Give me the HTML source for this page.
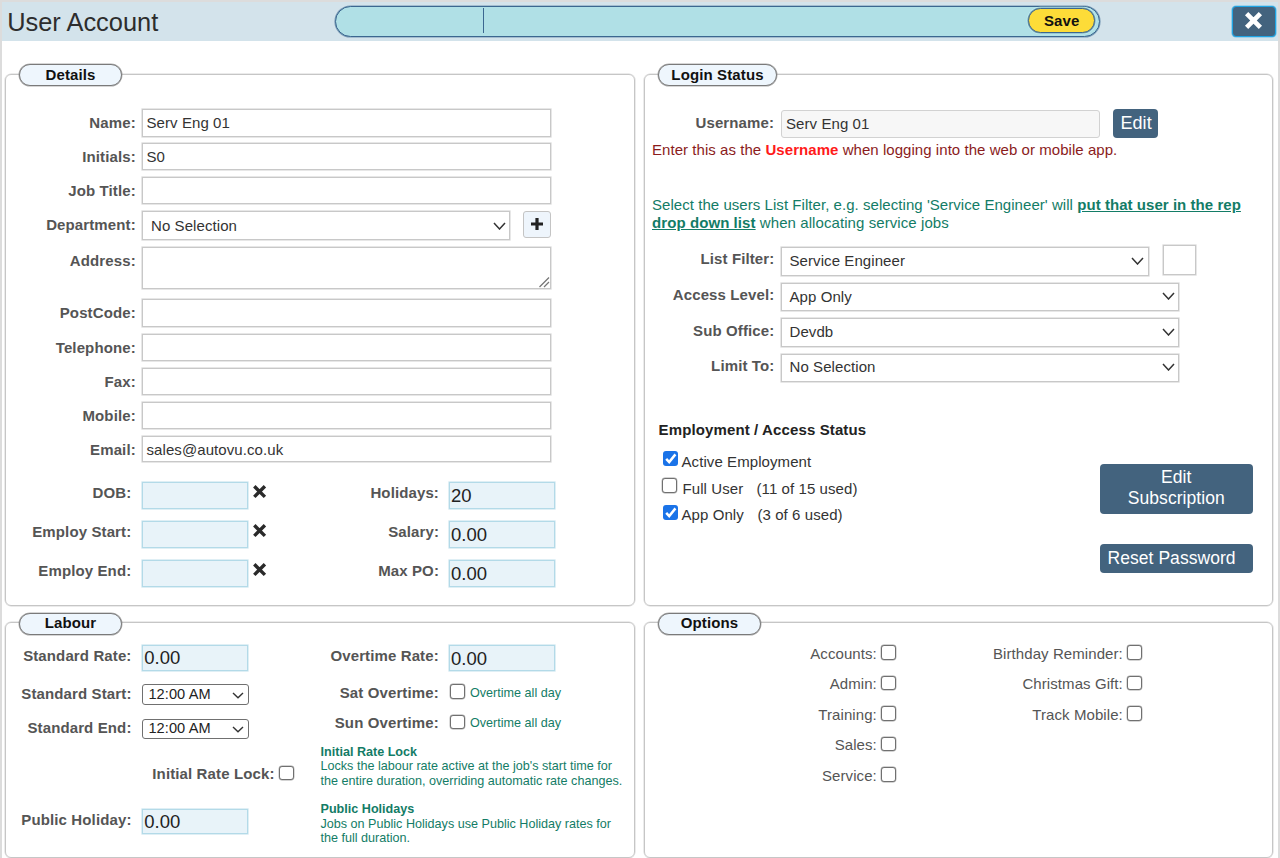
<!DOCTYPE html>
<html><head><meta charset="utf-8"><title>User Account</title>
<style>
html,body{margin:0;padding:0;background:#fff;width:1280px;height:858px;overflow:hidden}
body{position:relative;font-family:"Liberation Sans",sans-serif}
body>div{position:absolute;box-sizing:border-box}
.t{white-space:nowrap;line-height:1}
</style></head><body>
<div style="left:0px;top:0px;width:1280px;height:900px;border:2px solid #dcdcdc;"></div>
<div style="left:2px;top:2px;width:1276px;height:39px;background:#d3e3eb;"></div>
<div class="t" style="left:7.2px;top:10px;font-size:25.4px;font-weight:normal;color:#2d2d2d;letter-spacing:0.0px;">User Account</div>
<div style="left:334.5px;top:5.5px;width:765.0px;height:31.5px;background:#b0e0e6;border:1px solid #3b6790;border-radius:16px;box-shadow:0 0 0 0.6px rgba(59,103,144,0.6);"></div>
<div style="left:482.5px;top:8.2px;width:1.5px;height:25.3px;background:#3b6790;"></div>
<div style="left:1027.5px;top:8px;width:67.0px;height:25px;background:#fddc38;border:1.5px solid #3b6790;border-radius:13px;box-shadow:0 0 0 0.6px rgba(59,103,144,0.6),0 0 0 1.3px #c0eff1;"></div>
<div class="t" style="left:1044px;top:13px;font-size:15px;font-weight:bold;color:#111;letter-spacing:0.12px;">Save</div>
<div style="left:1231.5px;top:5.5px;width:44.0px;height:31.3px;background:#43637e;border:1px solid #1ea4e4;border-radius:4px;box-shadow:0 0 0 0.6px rgba(30,164,228,0.55);"></div>
<svg style="position:absolute;left:1244px;top:11px" width="19" height="19" viewBox="0 0 19 19"><path d="M2.6 2.6L16.4 16.4M16.4 2.6L2.6 16.4" stroke="#fff" stroke-width="4.6"/></svg>
<div style="left:5px;top:74px;width:630px;height:532px;border:1px solid #c6c6c6;border-radius:6px;box-shadow:0 0 0 0.5px rgba(198,198,198,0.7);"></div>
<div style="left:644px;top:74px;width:629px;height:532px;border:1px solid #c6c6c6;border-radius:6px;box-shadow:0 0 0 0.5px rgba(198,198,198,0.7);"></div>
<div style="left:5px;top:622px;width:630px;height:236px;border:1px solid #c6c6c6;border-radius:6px;box-shadow:0 0 0 0.5px rgba(198,198,198,0.7);"></div>
<div style="left:644px;top:622px;width:629px;height:236px;border:1px solid #c6c6c6;border-radius:6px;box-shadow:0 0 0 0.5px rgba(198,198,198,0.7);"></div>
<div style="left:19px;top:64.3px;width:103px;height:21.5px;background:#eef6fd;border:1px solid #7a7a7a;border-radius:12px;box-shadow:0 0 0 0.5px rgba(122,122,122,0.6);"></div>
<div class="t" style="left:19px;width:103px;text-align:center;top:67px;font-size:15px;font-weight:bold;color:#111;letter-spacing:0.12px;">Details</div>
<div style="left:658px;top:64.3px;width:119px;height:21.5px;background:#eef6fd;border:1px solid #7a7a7a;border-radius:12px;box-shadow:0 0 0 0.5px rgba(122,122,122,0.6);"></div>
<div class="t" style="left:658px;width:119px;text-align:center;top:67px;font-size:15px;font-weight:bold;color:#111;letter-spacing:0.12px;">Login Status</div>
<div style="left:19px;top:612.5px;width:103px;height:22.0px;background:#eef6fd;border:1px solid #7a7a7a;border-radius:12px;box-shadow:0 0 0 0.5px rgba(122,122,122,0.6);"></div>
<div class="t" style="left:19px;width:103px;text-align:center;top:615px;font-size:15px;font-weight:bold;color:#111;letter-spacing:0.12px;">Labour</div>
<div style="left:658px;top:612.5px;width:103px;height:22.0px;background:#eef6fd;border:1px solid #7a7a7a;border-radius:12px;box-shadow:0 0 0 0.5px rgba(122,122,122,0.6);"></div>
<div class="t" style="left:658px;width:103px;text-align:center;top:615px;font-size:15px;font-weight:bold;color:#111;letter-spacing:0.12px;">Options</div>
<div style="left:142.4px;top:109.1px;width:408.6px;height:27.5px;background:#fff;border:1px solid #c8c8c8;box-shadow:0 0 0 0.6px rgba(200,200,200,0.7);"></div>
<div class="t" style="right:1144.2px;text-align:right;top:115px;font-size:15px;font-weight:bold;color:#555;letter-spacing:0.12px;">Name:</div>
<div class="t" style="left:146.5px;top:115px;font-size:15px;font-weight:normal;color:#333;letter-spacing:0.08px;">Serv Eng 01</div>
<div style="left:142.4px;top:143.1px;width:408.6px;height:27.3px;background:#fff;border:1px solid #c8c8c8;box-shadow:0 0 0 0.6px rgba(200,200,200,0.7);"></div>
<div class="t" style="right:1144.2px;text-align:right;top:149px;font-size:15px;font-weight:bold;color:#555;letter-spacing:0.12px;">Initials:</div>
<div class="t" style="left:146.5px;top:149px;font-size:15px;font-weight:normal;color:#333;letter-spacing:0.08px;">S0</div>
<div style="left:142.4px;top:176.8px;width:408.6px;height:27.0px;background:#fff;border:1px solid #c8c8c8;box-shadow:0 0 0 0.6px rgba(200,200,200,0.7);"></div>
<div class="t" style="right:1144.2px;text-align:right;top:183px;font-size:15px;font-weight:bold;color:#555;letter-spacing:0.12px;">Job Title:</div>
<div style="left:142.4px;top:299.4px;width:408.6px;height:27.3px;background:#fff;border:1px solid #c8c8c8;box-shadow:0 0 0 0.6px rgba(200,200,200,0.7);"></div>
<div class="t" style="right:1144.2px;text-align:right;top:305px;font-size:15px;font-weight:bold;color:#555;letter-spacing:0.12px;">PostCode:</div>
<div style="left:142.4px;top:334px;width:408.6px;height:26.8px;background:#fff;border:1px solid #c8c8c8;box-shadow:0 0 0 0.6px rgba(200,200,200,0.7);"></div>
<div class="t" style="right:1144.2px;text-align:right;top:340px;font-size:15px;font-weight:bold;color:#555;letter-spacing:0.12px;">Telephone:</div>
<div style="left:142.4px;top:368px;width:408.6px;height:26.6px;background:#fff;border:1px solid #c8c8c8;box-shadow:0 0 0 0.6px rgba(200,200,200,0.7);"></div>
<div class="t" style="right:1144.2px;text-align:right;top:374px;font-size:15px;font-weight:bold;color:#555;letter-spacing:0.12px;">Fax:</div>
<div style="left:142.4px;top:402.2px;width:408.6px;height:26.4px;background:#fff;border:1px solid #c8c8c8;box-shadow:0 0 0 0.6px rgba(200,200,200,0.7);"></div>
<div class="t" style="right:1144.2px;text-align:right;top:408px;font-size:15px;font-weight:bold;color:#555;letter-spacing:0.12px;">Mobile:</div>
<div style="left:142.4px;top:436.1px;width:408.6px;height:26.4px;background:#fff;border:1px solid #c8c8c8;box-shadow:0 0 0 0.6px rgba(200,200,200,0.7);"></div>
<div class="t" style="right:1144.2px;text-align:right;top:442px;font-size:15px;font-weight:bold;color:#555;letter-spacing:0.12px;">Email:</div>
<div class="t" style="left:146.5px;top:442px;font-size:15px;font-weight:normal;color:#333;letter-spacing:0.08px;">sales@autovu.co.uk</div>
<div style="left:142.4px;top:210.6px;width:368.1px;height:29.4px;background:#fff;border:1px solid #c8c8c8;box-shadow:0 0 0 0.6px rgba(200,200,200,0.7);"></div>
<div class="t" style="right:1144.2px;text-align:right;top:217px;font-size:15px;font-weight:bold;color:#555;letter-spacing:0.12px;">Department:</div>
<div class="t" style="left:151px;top:218px;font-size:15px;font-weight:normal;color:#333;letter-spacing:0.08px;">No Selection</div>
<svg style="position:absolute;left:493px;top:221.5px" width="13" height="8.0"><path d="M1 1L6.5 7.0L12 1" fill="none" stroke="#333" stroke-width="1.5"/></svg>
<div style="left:523px;top:210.6px;width:27.6px;height:27.1px;background:#eef5fc;border:1.5px solid #c4c4c4;border-radius:3px;"></div>
<svg style="position:absolute;left:530px;top:217px" width="14" height="14"><path d="M7 1V13M1 7H13" stroke="#222" stroke-width="3.2"/></svg>
<div style="left:142.4px;top:247px;width:408.6px;height:41.8px;background:#fff;border:1px solid #c8c8c8;box-shadow:0 0 0 0.6px rgba(200,200,200,0.7);"></div>
<div class="t" style="right:1144.2px;text-align:right;top:253px;font-size:15px;font-weight:bold;color:#555;letter-spacing:0.12px;">Address:</div>
<svg style="position:absolute;left:538px;top:276px" width="12" height="12"><path d="M1.5 11L11 1.5M6 11L11 6" stroke="#777" stroke-width="1.3"/></svg>
<div style="left:142.3px;top:482px;width:105.6px;height:26.5px;background:#e8f3f9;border:1px solid #b3dae8;box-shadow:0 0 0 0.6px rgba(179,218,232,0.7);"></div>
<div class="t" style="right:1148.7px;text-align:right;top:485px;font-size:15px;font-weight:bold;color:#555;letter-spacing:0.12px;">DOB:</div>
<svg style="position:absolute;left:252px;top:483.8px" width="15" height="15"><path d="M2.3 2.3L12.9 12.9M12.9 2.3L2.3 12.9" stroke="#2a2a2a" stroke-width="3.4"/></svg>
<div style="left:449.2px;top:482px;width:105.8px;height:26.5px;background:#e8f3f9;border:1px solid #b3dae8;box-shadow:0 0 0 0.6px rgba(179,218,232,0.7);"></div>
<div class="t" style="right:841.0px;text-align:right;top:485px;font-size:15px;font-weight:bold;color:#555;letter-spacing:0.12px;">Holidays:</div>
<div class="t" style="left:451px;top:487px;font-size:18.5px;font-weight:normal;color:#222;letter-spacing:0.05px;">20</div>
<div style="left:142.3px;top:521.3px;width:105.6px;height:26.5px;background:#e8f3f9;border:1px solid #b3dae8;box-shadow:0 0 0 0.6px rgba(179,218,232,0.7);"></div>
<div class="t" style="right:1148.7px;text-align:right;top:524px;font-size:15px;font-weight:bold;color:#555;letter-spacing:0.12px;">Employ Start:</div>
<svg style="position:absolute;left:252px;top:523.1px" width="15" height="15"><path d="M2.3 2.3L12.9 12.9M12.9 2.3L2.3 12.9" stroke="#2a2a2a" stroke-width="3.4"/></svg>
<div style="left:449.2px;top:521.3px;width:105.8px;height:26.5px;background:#e8f3f9;border:1px solid #b3dae8;box-shadow:0 0 0 0.6px rgba(179,218,232,0.7);"></div>
<div class="t" style="right:841.0px;text-align:right;top:524px;font-size:15px;font-weight:bold;color:#555;letter-spacing:0.12px;">Salary:</div>
<div class="t" style="left:451px;top:526px;font-size:18.5px;font-weight:normal;color:#222;letter-spacing:0.05px;">0.00</div>
<div style="left:142.3px;top:560.3px;width:105.6px;height:26.5px;background:#e8f3f9;border:1px solid #b3dae8;box-shadow:0 0 0 0.6px rgba(179,218,232,0.7);"></div>
<div class="t" style="right:1148.7px;text-align:right;top:563px;font-size:15px;font-weight:bold;color:#555;letter-spacing:0.12px;">Employ End:</div>
<svg style="position:absolute;left:252px;top:562.1px" width="15" height="15"><path d="M2.3 2.3L12.9 12.9M12.9 2.3L2.3 12.9" stroke="#2a2a2a" stroke-width="3.4"/></svg>
<div style="left:449.2px;top:560.3px;width:105.8px;height:26.5px;background:#e8f3f9;border:1px solid #b3dae8;box-shadow:0 0 0 0.6px rgba(179,218,232,0.7);"></div>
<div class="t" style="right:841.0px;text-align:right;top:563px;font-size:15px;font-weight:bold;color:#555;letter-spacing:0.12px;">Max PO:</div>
<div class="t" style="left:451px;top:565px;font-size:18.5px;font-weight:normal;color:#222;letter-spacing:0.05px;">0.00</div>
<div style="left:142.4px;top:645px;width:105.5px;height:25.9px;background:#e8f3f9;border:1px solid #b3dae8;box-shadow:0 0 0 0.6px rgba(179,218,232,0.7);"></div>
<div class="t" style="right:1148.5px;text-align:right;top:648px;font-size:15px;font-weight:bold;color:#555;letter-spacing:0.12px;">Standard Rate:</div>
<div class="t" style="left:144.2px;top:649px;font-size:18.5px;font-weight:normal;color:#222;letter-spacing:0.05px;">0.00</div>
<div style="left:142.4px;top:684.2px;width:106.2px;height:21.1px;background:#fff;border:1.3px solid #707070;border-radius:3px;"></div>
<div class="t" style="right:1148.5px;text-align:right;top:686px;font-size:15px;font-weight:bold;color:#555;letter-spacing:0.12px;">Standard Start:</div>
<div class="t" style="left:148.4px;top:687px;font-size:14.6px;font-weight:normal;color:#222;letter-spacing:0.08px;">12:00 AM</div>
<svg style="position:absolute;left:232px;top:691.9px" width="12" height="6.8"><path d="M1 1L6.0 5.8L11 1" fill="none" stroke="#333" stroke-width="1.4"/></svg>
<div style="left:142.4px;top:718.7px;width:106.2px;height:20.6px;background:#fff;border:1.3px solid #707070;border-radius:3px;"></div>
<div class="t" style="right:1148.5px;text-align:right;top:720px;font-size:15px;font-weight:bold;color:#555;letter-spacing:0.12px;">Standard End:</div>
<div class="t" style="left:148.4px;top:721px;font-size:14.6px;font-weight:normal;color:#222;letter-spacing:0.08px;">12:00 AM</div>
<svg style="position:absolute;left:232px;top:726.4px" width="12" height="6.8"><path d="M1 1L6.0 5.8L11 1" fill="none" stroke="#333" stroke-width="1.4"/></svg>
<div class="t" style="right:1005.5px;text-align:right;top:766px;font-size:15px;font-weight:bold;color:#555;letter-spacing:0.12px;">Initial Rate Lock:</div>
<div style="left:279px;top:765.7px;width:15px;height:14.8px;background:#fff;border:1px solid #707070;border-radius:3px;box-shadow:0 0 0 0.4px rgba(112,112,112,0.6);"></div>
<div style="left:142.4px;top:808.6px;width:105.5px;height:25.8px;background:#e8f3f9;border:1px solid #b3dae8;box-shadow:0 0 0 0.6px rgba(179,218,232,0.7);"></div>
<div class="t" style="right:1148.5px;text-align:right;top:812px;font-size:15px;font-weight:bold;color:#555;letter-spacing:0.12px;">Public Holiday:</div>
<div class="t" style="left:144.2px;top:813px;font-size:18.5px;font-weight:normal;color:#222;letter-spacing:0.05px;">0.00</div>
<div style="left:449.2px;top:645.2px;width:105.8px;height:25.7px;background:#e8f3f9;border:1px solid #b3dae8;box-shadow:0 0 0 0.6px rgba(179,218,232,0.7);"></div>
<div class="t" style="right:841.2px;text-align:right;top:648px;font-size:15px;font-weight:bold;color:#555;letter-spacing:0.12px;">Overtime Rate:</div>
<div class="t" style="left:451px;top:650px;font-size:18.5px;font-weight:normal;color:#222;letter-spacing:0.05px;">0.00</div>
<div class="t" style="right:841.2px;text-align:right;top:685px;font-size:15px;font-weight:bold;color:#555;letter-spacing:0.12px;">Sat Overtime:</div>
<div style="left:450.1px;top:684.3px;width:14.8px;height:14.6px;background:#fff;border:1px solid #707070;border-radius:3px;box-shadow:0 0 0 0.4px rgba(112,112,112,0.6);"></div>
<div class="t" style="left:470px;top:687px;font-size:12.6px;font-weight:normal;color:#137c66;letter-spacing:0.0px;">Overtime all day</div>
<div class="t" style="right:841.2px;text-align:right;top:715px;font-size:15px;font-weight:bold;color:#555;letter-spacing:0.12px;">Sun Overtime:</div>
<div style="left:450.1px;top:714.6px;width:14.8px;height:14.6px;background:#fff;border:1px solid #707070;border-radius:3px;box-shadow:0 0 0 0.4px rgba(112,112,112,0.6);"></div>
<div class="t" style="left:470px;top:717px;font-size:12.6px;font-weight:normal;color:#137c66;letter-spacing:0.0px;">Overtime all day</div>
<div class="t" style="left:320.5px;top:746px;font-size:12.6px;font-weight:bold;color:#137c66;letter-spacing:0.0px;">Initial Rate Lock</div>
<div class="t" style="left:320.5px;top:760px;font-size:12.6px;font-weight:normal;color:#137c66;letter-spacing:0.0px;">Locks the labour rate active at the job's start time for</div>
<div class="t" style="left:320.5px;top:775px;font-size:12.6px;font-weight:normal;color:#137c66;letter-spacing:0.0px;">the entire duration, overriding automatic rate changes.</div>
<div class="t" style="left:320.5px;top:803px;font-size:12.6px;font-weight:bold;color:#137c66;letter-spacing:0.0px;">Public Holidays</div>
<div class="t" style="left:320.5px;top:818px;font-size:12.6px;font-weight:normal;color:#137c66;letter-spacing:0.0px;">Jobs on Public Holidays use Public Holiday rates for</div>
<div class="t" style="left:320.5px;top:832px;font-size:12.6px;font-weight:normal;color:#137c66;letter-spacing:0.0px;">the full duration.</div>
<div class="t" style="right:505.9px;text-align:right;top:115px;font-size:15px;font-weight:bold;color:#555;letter-spacing:0.12px;">Username:</div>
<div style="left:781.25px;top:109.7px;width:318.25px;height:28.6px;background:#f7f7f7;border:1.5px solid #d2d2d2;border-radius:3px;"></div>
<div class="t" style="left:786px;top:116px;font-size:15px;font-weight:normal;color:#333;letter-spacing:0.08px;">Serv Eng 01</div>
<div style="left:1113px;top:109.2px;width:45px;height:28.9px;background:#43637e;border-radius:4px;"></div>
<div class="t" style="left:1120.5px;top:114px;font-size:18px;font-weight:normal;color:#fff;letter-spacing:0.05px;">Edit</div>
<div class="t" style="left:652px;top:142px;font-size:15px;font-weight:normal;color:#8b1c1c;letter-spacing:0.05px;">Enter this as the <b style="color:#ff1a1a">Username</b> when logging into the web or mobile app.</div>
<div class="t" style="left:652px;top:197px;font-size:15px;font-weight:normal;color:#137c66;letter-spacing:0.05px;">Select the users List Filter, e.g. selecting 'Service Engineer' will <b style="text-decoration:underline">put that user in the rep</b></div>
<div class="t" style="left:652px;top:215px;font-size:15px;font-weight:normal;color:#137c66;letter-spacing:0.08px;"><b style="text-decoration:underline">drop down list</b> when allocating service jobs</div>
<div class="t" style="right:505.6px;text-align:right;top:251px;font-size:15px;font-weight:bold;color:#555;letter-spacing:0.12px;">List Filter:</div>
<div style="left:780.9px;top:247px;width:367.85px;height:28.5px;background:#fff;border:1px solid #c8c8c8;box-shadow:0 0 0 0.6px rgba(200,200,200,0.7);"></div>
<div class="t" style="left:789.5px;top:253px;font-size:15px;font-weight:normal;color:#333;letter-spacing:0.08px;">Service Engineer</div>
<svg style="position:absolute;left:1131.25px;top:256.5px" width="13.0" height="8.0"><path d="M1 1L6.5 7.0L12.0 1" fill="none" stroke="#333" stroke-width="1.5"/></svg>
<div class="t" style="right:505.6px;text-align:right;top:287px;font-size:15px;font-weight:bold;color:#555;letter-spacing:0.12px;">Access Level:</div>
<div style="left:780.9px;top:282.5px;width:398.6px;height:28.3px;background:#fff;border:1px solid #c8c8c8;box-shadow:0 0 0 0.6px rgba(200,200,200,0.7);"></div>
<div class="t" style="left:789.5px;top:289px;font-size:15px;font-weight:normal;color:#333;letter-spacing:0.08px;">App Only</div>
<svg style="position:absolute;left:1162.0px;top:292.0px" width="13.0" height="8.0"><path d="M1 1L6.5 7.0L12.0 1" fill="none" stroke="#333" stroke-width="1.5"/></svg>
<div class="t" style="right:505.6px;text-align:right;top:323px;font-size:15px;font-weight:bold;color:#555;letter-spacing:0.12px;">Sub Office:</div>
<div style="left:780.9px;top:318.3px;width:398.6px;height:28.3px;background:#fff;border:1px solid #c8c8c8;box-shadow:0 0 0 0.6px rgba(200,200,200,0.7);"></div>
<div class="t" style="left:789.5px;top:324px;font-size:15px;font-weight:normal;color:#333;letter-spacing:0.08px;">Devdb</div>
<svg style="position:absolute;left:1162.0px;top:327.8px" width="13.0" height="8.0"><path d="M1 1L6.5 7.0L12.0 1" fill="none" stroke="#333" stroke-width="1.5"/></svg>
<div class="t" style="right:505.6px;text-align:right;top:358px;font-size:15px;font-weight:bold;color:#555;letter-spacing:0.12px;">Limit To:</div>
<div style="left:780.9px;top:353.6px;width:398.6px;height:28.9px;background:#fff;border:1px solid #c8c8c8;box-shadow:0 0 0 0.6px rgba(200,200,200,0.7);"></div>
<div class="t" style="left:789.5px;top:359px;font-size:15px;font-weight:normal;color:#333;letter-spacing:0.08px;">No Selection</div>
<svg style="position:absolute;left:1162.0px;top:363.1px" width="13.0" height="8.0"><path d="M1 1L6.5 7.0L12.0 1" fill="none" stroke="#333" stroke-width="1.5"/></svg>
<div style="left:1162.5px;top:245px;width:33.0px;height:29.5px;background:#fff;border:1px solid #c8c8c8;box-shadow:0 0 0 0.6px rgba(200,200,200,0.7);"></div>
<div class="t" style="left:658.6px;top:422px;font-size:15px;font-weight:bold;color:#222;letter-spacing:0.12px;">Employment / Access Status</div>
<div style="left:662.5px;top:451.2px;width:15.0px;height:15.2px;background:#1a73e8;border-radius:3px;"><svg style="position:absolute;left:1px;top:1px" width="13" height="13"><path d="M2.2 6.8L5.2 10L11.4 2.4" fill="none" stroke="#fff" stroke-width="2.5"/></svg></div>
<div class="t" style="left:681.5px;top:454px;font-size:15px;font-weight:normal;color:#333;letter-spacing:0.08px;">Active Employment</div>
<div style="left:662.3px;top:478px;width:15.0px;height:15.3px;background:#fff;border:1px solid #707070;border-radius:3px;box-shadow:0 0 0 0.4px rgba(112,112,112,0.6);"></div>
<div class="t" style="left:682.5px;top:481px;font-size:15px;font-weight:normal;color:#333;letter-spacing:0.08px;">Full User</div>
<div class="t" style="left:756.5px;top:481px;font-size:15px;font-weight:normal;color:#333;letter-spacing:0.08px;">(11 of 15 used)</div>
<div style="left:662.5px;top:504.5px;width:15.0px;height:15.1px;background:#1a73e8;border-radius:3px;"><svg style="position:absolute;left:1px;top:1px" width="13" height="13"><path d="M2.2 6.8L5.2 10L11.4 2.4" fill="none" stroke="#fff" stroke-width="2.5"/></svg></div>
<div class="t" style="left:681.5px;top:507px;font-size:15px;font-weight:normal;color:#333;letter-spacing:0.08px;">App Only</div>
<div class="t" style="left:757.4px;top:507px;font-size:15px;font-weight:normal;color:#333;letter-spacing:0.08px;">(3 of 6 used)</div>
<div style="left:1099.5px;top:463.75px;width:153.5px;height:50.0px;background:#43637e;border-radius:4px;"></div>
<div class="t" style="left:1099.5px;width:153.5px;text-align:center;top:469px;font-size:17.5px;font-weight:normal;color:#fff;letter-spacing:0.05px;">Edit</div>
<div class="t" style="left:1099.5px;width:153.5px;text-align:center;top:490px;font-size:17.5px;font-weight:normal;color:#fff;letter-spacing:0.05px;">Subscription</div>
<div style="left:1099.5px;top:543.75px;width:153.5px;height:28.75px;background:#43637e;border-radius:4px;"></div>
<div class="t" style="left:1107.5px;top:550px;font-size:17.5px;font-weight:normal;color:#fff;letter-spacing:0.05px;">Reset Password</div>
<div class="t" style="right:403.2px;text-align:right;top:646px;font-size:15px;font-weight:normal;color:#555;letter-spacing:0.08px;">Accounts:</div>
<div style="left:881.1px;top:645.2px;width:14.8px;height:14.7px;background:#fff;border:1px solid #707070;border-radius:3px;box-shadow:0 0 0 0.4px rgba(112,112,112,0.6);"></div>
<div class="t" style="right:403.2px;text-align:right;top:676px;font-size:15px;font-weight:normal;color:#555;letter-spacing:0.08px;">Admin:</div>
<div style="left:881.1px;top:675.7px;width:14.8px;height:14.7px;background:#fff;border:1px solid #707070;border-radius:3px;box-shadow:0 0 0 0.4px rgba(112,112,112,0.6);"></div>
<div class="t" style="right:403.2px;text-align:right;top:707px;font-size:15px;font-weight:normal;color:#555;letter-spacing:0.08px;">Training:</div>
<div style="left:881.1px;top:706.2px;width:14.8px;height:14.7px;background:#fff;border:1px solid #707070;border-radius:3px;box-shadow:0 0 0 0.4px rgba(112,112,112,0.6);"></div>
<div class="t" style="right:403.2px;text-align:right;top:737px;font-size:15px;font-weight:normal;color:#555;letter-spacing:0.08px;">Sales:</div>
<div style="left:881.1px;top:736.7px;width:14.8px;height:14.7px;background:#fff;border:1px solid #707070;border-radius:3px;box-shadow:0 0 0 0.4px rgba(112,112,112,0.6);"></div>
<div class="t" style="right:403.2px;text-align:right;top:768px;font-size:15px;font-weight:normal;color:#555;letter-spacing:0.08px;">Service:</div>
<div style="left:881.1px;top:767.2px;width:14.8px;height:14.7px;background:#fff;border:1px solid #707070;border-radius:3px;box-shadow:0 0 0 0.4px rgba(112,112,112,0.6);"></div>
<div class="t" style="right:157.2px;text-align:right;top:646px;font-size:15px;font-weight:normal;color:#555;letter-spacing:0.08px;">Birthday Reminder:</div>
<div style="left:1127px;top:645.2px;width:15.2px;height:14.7px;background:#fff;border:1px solid #707070;border-radius:3px;box-shadow:0 0 0 0.4px rgba(112,112,112,0.6);"></div>
<div class="t" style="right:157.2px;text-align:right;top:676px;font-size:15px;font-weight:normal;color:#555;letter-spacing:0.08px;">Christmas Gift:</div>
<div style="left:1127px;top:675.7px;width:15.2px;height:14.7px;background:#fff;border:1px solid #707070;border-radius:3px;box-shadow:0 0 0 0.4px rgba(112,112,112,0.6);"></div>
<div class="t" style="right:157.2px;text-align:right;top:707px;font-size:15px;font-weight:normal;color:#555;letter-spacing:0.08px;">Track Mobile:</div>
<div style="left:1127px;top:706.2px;width:15.2px;height:14.7px;background:#fff;border:1px solid #707070;border-radius:3px;box-shadow:0 0 0 0.4px rgba(112,112,112,0.6);"></div>
</body></html>
